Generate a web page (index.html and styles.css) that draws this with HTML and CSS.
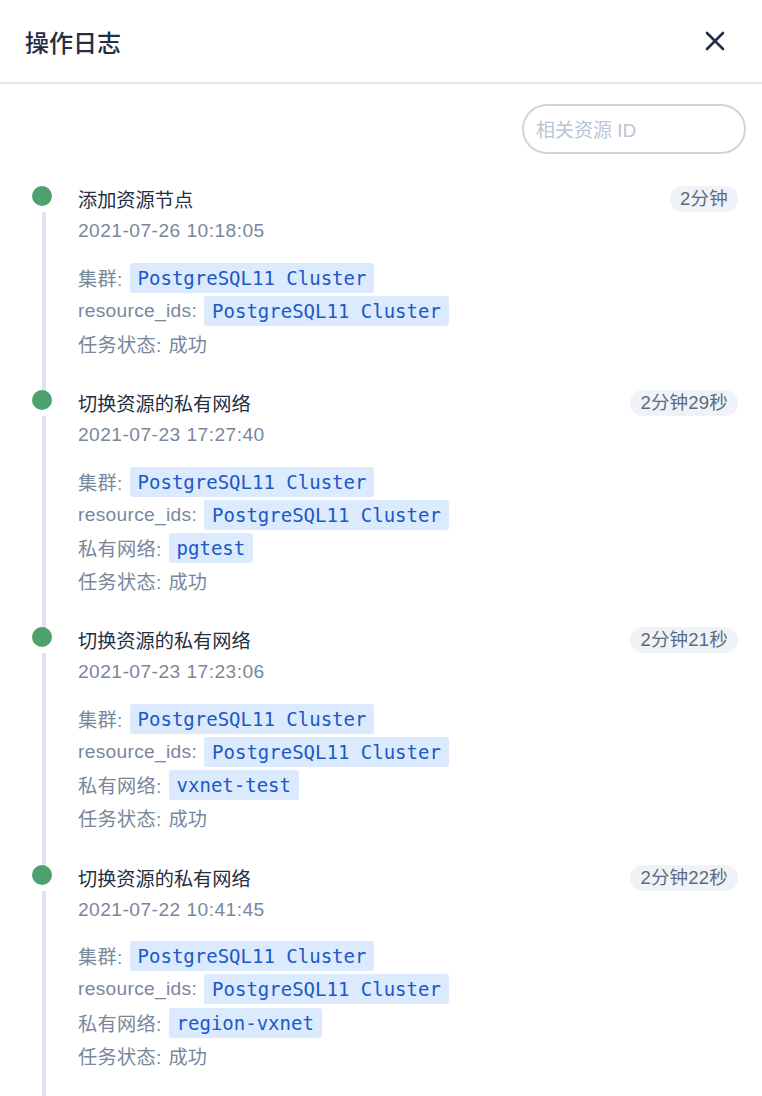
FILE: index.html
```html
<!DOCTYPE html>
<html lang="zh">
<head>
<meta charset="utf-8">
<title>操作日志</title>
<link rel="stylesheet" href="styles.css">
</head>
<body>
<div class="drawer">
  <header class="head">
    <h1 class="head-title">操作日志</h1>
    <button class="close" aria-label="关闭">
      <svg width="20" height="20" viewBox="0 0 20 20"><path d="M2 2 L18 18 M18 2 L2 18" stroke="#242e42" stroke-width="2.6" stroke-linecap="round" fill="none"/></svg>
    </button>
  </header>
  <div class="search-row">
    <input class="search" type="text" placeholder="相关资源 ID">
  </div>
  <ul class="timeline">
    <li class="item">
      <div class="rail"><span class="dot"></span><span class="line"></span></div>
      <div class="content">
        <div class="top"><div class="title">添加资源节点</div><span class="badge">2分钟</span></div>
        <div class="date">2021-07-26 10:18:05</div>
        <div class="details">
          <div class="row"><span class="label">集群:</span><span class="tag">PostgreSQL11 Cluster</span></div>
          <div class="row"><span class="label">resource_ids:</span><span class="tag">PostgreSQL11 Cluster</span></div>
          <div class="row"><span class="label">任务状态:</span><span class="value">成功</span></div>
        </div>
      </div>
    </li>
    <li class="item">
      <div class="rail"><span class="dot"></span><span class="line"></span></div>
      <div class="content">
        <div class="top"><div class="title">切换资源的私有网络</div><span class="badge">2分钟29秒</span></div>
        <div class="date">2021-07-23 17:27:40</div>
        <div class="details">
          <div class="row"><span class="label">集群:</span><span class="tag">PostgreSQL11 Cluster</span></div>
          <div class="row"><span class="label">resource_ids:</span><span class="tag">PostgreSQL11 Cluster</span></div>
          <div class="row"><span class="label">私有网络:</span><span class="tag">pgtest</span></div>
          <div class="row"><span class="label">任务状态:</span><span class="value">成功</span></div>
        </div>
      </div>
    </li>
    <li class="item">
      <div class="rail"><span class="dot"></span><span class="line"></span></div>
      <div class="content">
        <div class="top"><div class="title">切换资源的私有网络</div><span class="badge">2分钟21秒</span></div>
        <div class="date">2021-07-23 17:23:06</div>
        <div class="details">
          <div class="row"><span class="label">集群:</span><span class="tag">PostgreSQL11 Cluster</span></div>
          <div class="row"><span class="label">resource_ids:</span><span class="tag">PostgreSQL11 Cluster</span></div>
          <div class="row"><span class="label">私有网络:</span><span class="tag">vxnet-test</span></div>
          <div class="row"><span class="label">任务状态:</span><span class="value">成功</span></div>
        </div>
      </div>
    </li>
    <li class="item">
      <div class="rail"><span class="dot"></span><span class="line"></span></div>
      <div class="content">
        <div class="top"><div class="title">切换资源的私有网络</div><span class="badge">2分钟22秒</span></div>
        <div class="date">2021-07-22 10:41:45</div>
        <div class="details">
          <div class="row"><span class="label">集群:</span><span class="tag">PostgreSQL11 Cluster</span></div>
          <div class="row"><span class="label">resource_ids:</span><span class="tag">PostgreSQL11 Cluster</span></div>
          <div class="row"><span class="label">私有网络:</span><span class="tag">region-vxnet</span></div>
          <div class="row"><span class="label">任务状态:</span><span class="value">成功</span></div>
        </div>
      </div>
    </li>
  </ul>
</div>
</body>
</html>
```

FILE: styles.css
```css
* { box-sizing: border-box; }
html, body { margin: 0; padding: 0; overflow: hidden; background: #fff; }
body {
  font-family: "Liberation Sans", "Noto Sans CJK SC", sans-serif;
  color: #242e42;
  width: 762px;
  height: 1096px;
}
.head {
  height: 84px;
  border-bottom: 2px solid #dfe6ee;
  display: flex;
  align-items: center;
  justify-content: space-between;
  padding: 0 35px 0 25px;
}
.head-title {
  margin: 0;
  font-size: 24px;
  font-weight: 500;
  color: #242e42;
}
.close {
  border: 0;
  background: none;
  padding: 0;
  width: 24px;
  height: 24px;
  display: flex;
  align-items: center;
  justify-content: center;
}
.search-row {
  display: flex;
  justify-content: flex-end;
  padding: 20px 16px 0 0;
}
.search {
  width: 224px;
  height: 50px;
  border: 2px solid #cad5e2;
  border-radius: 25px;
  padding: 3px 12px 0;
  font-family: "Liberation Sans", "Noto Sans CJK SC", sans-serif;
  font-size: 19px;
  color: #242e42;
  outline: none;
}
.search::placeholder { color: #b9c5d4; }
.timeline {
  list-style: none;
  margin: 0;
  padding: 32px 24px 0 32px;
}
.item {
  display: flex;
  gap: 26px;
  padding-bottom: 29.5px;
}
.item:last-child { padding-bottom: 60px; }
.rail {
  width: 20px;
  flex: none;
  display: flex;
  flex-direction: column;
}
.dot {
  width: 20px;
  height: 20px;
  border-radius: 50%;
  background: #4ca16c;
  flex: none;
}
.line {
  width: 4px;
  margin-left: 10px;
  margin-top: 6px;
  margin-bottom: -32px;
  flex: 1;
  background: #dce5ef;
}
.content { flex: 1; }
.top {
  display: flex;
  justify-content: space-between;
  align-items: flex-start;
}
.title {
  font-size: 19.2px;
  line-height: 30px;
  color: #242e42;
}
.badge {
  height: 26px;
  line-height: 26px;
  padding: 0 10px;
  border-radius: 13px;
  background: #eff3f8;
  color: #5b6a7f;
  font-size: 18.5px;
  letter-spacing: 0.2px;
}
.date {
  font-size: 19.2px;
  line-height: 30px;
  color: #79879c;
  letter-spacing: 0.45px;
}
.details { margin-top: 15px; }
.row {
  height: 33.2px;
  display: flex;
  align-items: center;
  gap: 7px;
  font-size: 19.2px;
  color: #79879c;
}
.label { letter-spacing: 0.3px; }
.value { color: #79879c; }
.tag {
  height: 30px;
  line-height: 30px;
  padding: 0 8px;
  border-radius: 3px;
  background: #dbeafc;
  color: #1b58c8;
  font-family: "DejaVu Sans Mono", "Liberation Mono", monospace;
  font-size: 19px;
}
```
